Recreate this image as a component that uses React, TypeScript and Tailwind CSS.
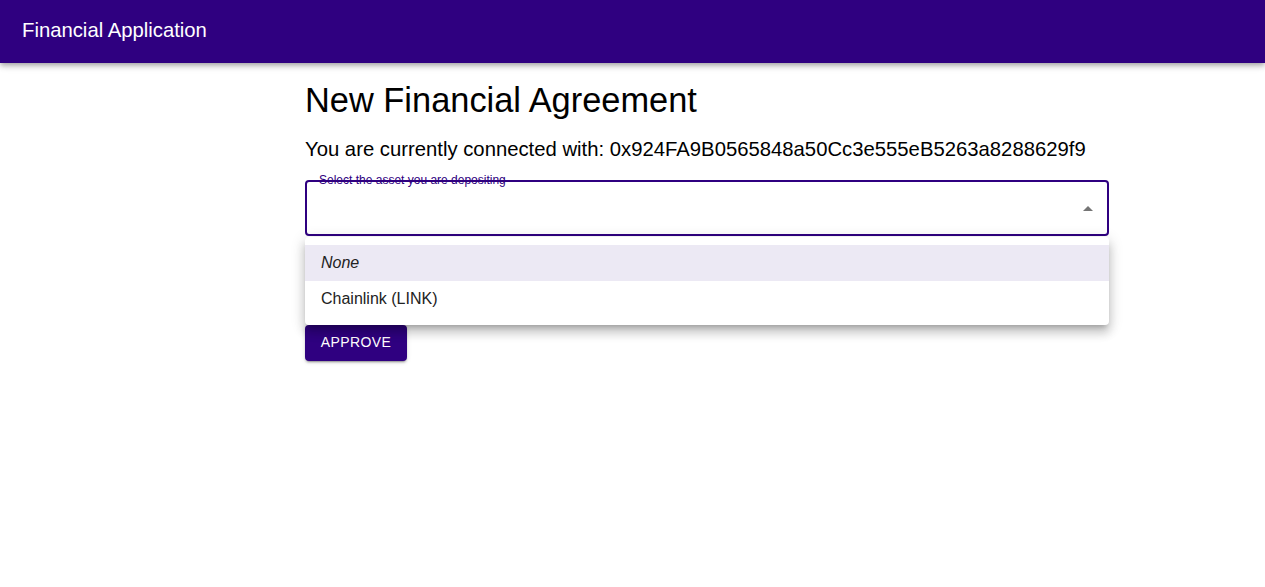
export default function App() {
  return (
    <div className="min-h-[587px] bg-white font-['Liberation_Sans',Arial,sans-serif] text-black">
      <header className="h-[63px] bg-[#2f0080] flex items-center px-[22px] pb-[3px] shadow-[0_2px_4px_-1px_rgba(0,0,0,0.2),0_4px_5px_0_rgba(0,0,0,0.14),0_1px_10px_0_rgba(0,0,0,0.12)] relative z-10">
        <h1 className="text-[20.3px] text-white leading-none">Financial Application</h1>
      </header>

      <main className="pl-[305px] w-[1109px]">
        <h2 className="text-[34.4px] leading-none pt-[20px]">New Financial Agreement</h2>
        <p className="text-[20.3px] leading-none mt-[22px]">
          You are currently connected with: 0x924FA9B0565848a50Cc3e555eB5263a8288629f9
        </p>

        <div className="relative mt-[20px]">
          <div className="relative h-[56px] border-2 border-[#2f0080] rounded-[4px] flex items-center justify-end pr-[14px]">
            <span className="absolute left-[12px] -top-[8px] text-[12px] leading-none text-[#2f0080]">
              Select the asset you are depositing
            </span>
            <svg width="10" height="5" viewBox="0 0 10 5" className="mt-[2px]">
              <path d="M0 5 L5 0 L10 5 Z" fill="#757575" />
            </svg>
          </div>

          <div className="absolute left-0 right-0 top-[57px] z-20 bg-white rounded-[4px] py-[8px] shadow-[0_5px_5px_-3px_rgba(0,0,0,0.2),0_8px_10px_1px_rgba(0,0,0,0.14),0_3px_14px_2px_rgba(0,0,0,0.12)]">
            <div className="h-[36px] flex items-center px-[16px] bg-[#ece9f4] text-[16px] italic text-[#222]">
              None
            </div>
            <div className="h-[36px] flex items-center px-[16px] text-[16px] text-[#222]">
              Chainlink (LINK)
            </div>
          </div>

          <div className="h-[89px]" />
          <button className="h-[36px] w-[102px] bg-[#2f0080] text-white text-[14px] tracking-[0.4px] rounded-[4px] shadow-[0_3px_1px_-2px_rgba(0,0,0,0.2),0_2px_2px_0_rgba(0,0,0,0.14),0_1px_5px_0_rgba(0,0,0,0.12)]">
            APPROVE
          </button>
        </div>
      </main>
    </div>
  );
}
